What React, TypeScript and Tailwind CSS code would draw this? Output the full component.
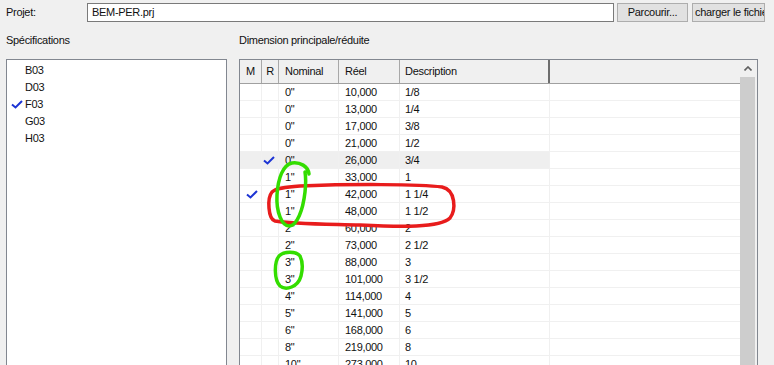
import type { ReactNode } from "react";

const font = "font-['Tahoma','Liberation_Sans',Arial,sans-serif] text-[11px] tracking-[-0.3px] text-[#111]";

const specs = ["B03", "D03", "F03", "G03", "H03"];

const rows = [
  { nom: '0"', reel: "10,000", desc: "1/8" },
  { nom: '0"', reel: "13,000", desc: "1/4" },
  { nom: '0"', reel: "17,000", desc: "3/8" },
  { nom: '0"', reel: "21,000", desc: "1/2" },
  { nom: '0"', reel: "26,000", desc: "3/4", r: true, selected: true },
  { nom: '1"', reel: "33,000", desc: "1" },
  { nom: '1"', reel: "42,000", desc: "1 1/4", m: true },
  { nom: '1"', reel: "48,000", desc: "1 1/2" },
  { nom: '2"', reel: "60,000", desc: "2" },
  { nom: '2"', reel: "73,000", desc: "2 1/2" },
  { nom: '3"', reel: "88,000", desc: "3" },
  { nom: '3"', reel: "101,000", desc: "3 1/2" },
  { nom: '4"', reel: "114,000", desc: "4" },
  { nom: '5"', reel: "141,000", desc: "5" },
  { nom: '6"', reel: "168,000", desc: "6" },
  { nom: '8"', reel: "219,000", desc: "8" },
  { nom: '10"', reel: "273,000", desc: "10" },
];

function Check() {
  return (
    <svg width="12" height="9" viewBox="0 0 12 9" className="shrink-0">
      <polyline points="1,4.5 4.5,7.5 11,1" fill="none" stroke="#1c34d4" strokeWidth="2" />
    </svg>
  );
}

function HeadCell({ w, children, center, dark }: { w: string; children?: ReactNode; center?: boolean; dark?: boolean }) {
  return (
    <div
      className={`${w} flex h-full shrink-0 items-center border-r ${dark ? "border-r-2 border-[#6d6d6d]" : "border-[#a8a8a8]"} ${center ? "justify-center" : "pl-[6px]"}`}
    >
      {children}
    </div>
  );
}

export default function App() {
  return (
    <div className={`relative h-[365px] w-[774px] overflow-hidden bg-[#f0f0f0] ${font}`}>
      {/* project row */}
      <div className="flex h-[22px] items-end pl-[6px]">
        <div className="flex h-[19px] w-[81px] items-center">Projet:</div>
        <div className="flex h-[19px] w-[527px] items-center border border-[#7a7a7a] bg-white pl-[4px]">
          BEM-PER.prj
        </div>
        <button className="ml-[3px] h-[19px] w-[71px] border border-[#adadad] bg-[#e1e1e1] leading-none">
          Parcourir...
        </button>
        <button className="ml-[4px] h-[19px] w-[73px] overflow-hidden whitespace-nowrap border border-[#adadad] bg-[#e1e1e1] pl-[2px] text-left leading-none">
          charger le fichier
        </button>
      </div>

      <div className="flex">
        {/* specifications */}
        <div className="ml-[6px] w-[221px]">
          <div className="h-[37px] pt-[11px] leading-[14px]">Spécifications</div>
          <div className="h-[320px] border border-[#828790] bg-white pt-[2px]">
            {specs.map((s) => (
              <div key={s} className="flex h-[17px] items-center">
                <div className="flex w-[18px] pl-[4px]">{s === "F03" ? <Check /> : null}</div>
                <span>{s}</span>
              </div>
            ))}
          </div>
        </div>

        {/* dimensions table */}
        <div className="ml-[12px] w-[519px]">
          <div className="h-[37px] pt-[11px] leading-[14px]">Dimension principale/réduite</div>
          <div className="flex h-[320px] border border-[#828790] bg-white">
            <div className="w-[500px]">
              <div className="flex h-[24px] border-b border-[#a0a0a0] bg-[#f0f0f0]">
                <HeadCell w="w-[22px]" center>M</HeadCell>
                <HeadCell w="w-[17px]" center>R</HeadCell>
                <HeadCell w="w-[60px]">Nominal</HeadCell>
                <HeadCell w="w-[61px]">Réel</HeadCell>
                <HeadCell w="w-[150px]" dark>
                  <span className="-ml-[1px]">Description</span>
                </HeadCell>
                <div className="flex-1" />
              </div>
              {rows.map((r, i) => (
                <div key={i} className="flex h-[17px]">
                  <div className={`flex w-[310px] shrink-0 border-b border-[#f0f0f0] ${r.selected ? "bg-[#efefef]" : ""}`}>
                    <div className="flex w-[22px] items-center border-r border-[#f0f0f0] pl-[6px]">
                      {r.m ? <Check /> : null}
                    </div>
                    <div className="flex w-[17px] items-center border-r border-[#f0f0f0] pl-[1px]">
                      {r.r ? <Check /> : null}
                    </div>
                    <div className="flex w-[60px] items-center border-r border-[#f0f0f0] pl-[6px]">{r.nom}</div>
                    <div className="flex w-[61px] items-center border-r border-[#f0f0f0] pl-[6px]">{r.reel}</div>
                    <div className="flex w-[150px] items-center border-r border-[#f0f0f0] pl-[5px]">{r.desc}</div>
                  </div>
                  <div className="flex-1 border-b border-[#f0f0f0]" />
                </div>
              ))}
            </div>
            {/* scrollbar */}
            <div className="flex w-[17px] flex-col bg-[#f0f0f0]">
              <div className="flex h-[17px] w-[15px] items-center justify-center">
                <svg width="8" height="5" viewBox="0 0 8 5">
                  <polyline points="0.5,4.5 4,1 7.5,4.5" fill="none" stroke="#606060" strokeWidth="1.6" />
                </svg>
              </div>
              <div className="w-[15px] flex-1 bg-[#cdcdcd]" />
            </div>
          </div>
        </div>
      </div>

      {/* hand-drawn annotations */}
      <svg className="pointer-events-none absolute left-0 top-0" width="774" height="365">
        <path
          d="M300,186 C350,184 420,184 442,187 C456,190 456,210 450,218 C440,228 400,227 360,225 C320,224 290,224 275,221 C268,219 267,198 272,192 C276,188 285,187 300,186 Z"
          fill="none"
          stroke="#e81c1c"
          strokeWidth="3.5"
          strokeLinecap="round"
        />
        <path
          d="M309,174 C308,166 300,162 292,163 C283,165 278,178 277,195 C276,212 282,226 289,226 C297,226 303,210 305,192 C306,183 306,178 305,172"
          fill="none"
          stroke="#33dd00"
          strokeWidth="3.5"
          strokeLinecap="round"
        />
        <path
          d="M300,256 C296,251 284,251 279,256 C274,262 274,280 280,286 C286,291 298,287 301,276 C303,268 303,262 300,256"
          fill="none"
          stroke="#33dd00"
          strokeWidth="3.5"
          strokeLinecap="round"
        />
      </svg>
    </div>
  );
}
